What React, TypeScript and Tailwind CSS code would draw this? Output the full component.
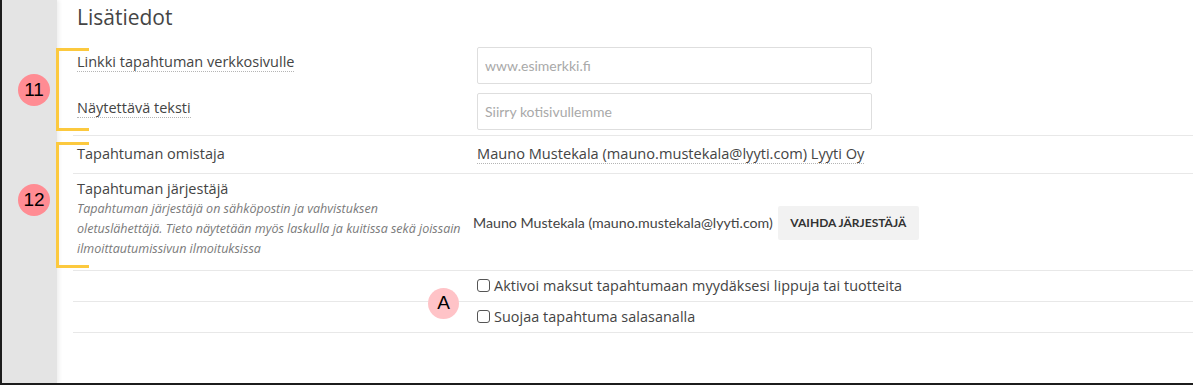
import React from "react";

const labelFont = { fontFamily: '"Open Sans", "Noto Sans", sans-serif' };
const lato = { fontFamily: 'Lato, "Liberation Sans", sans-serif' };

function Badge({ text, light, className }: { text: string; light?: boolean; className: string }) {
  return (
    <div
      className={`absolute flex items-center justify-center rounded-full text-[19px] font-medium text-black ${light ? "bg-[#ffc3c7]" : "bg-[#ff8c93]"} ${className}`}
      style={{ fontFamily: '"Liberation Sans", Arial, sans-serif' }}
    >
      {text}
    </div>
  );
}

function DottedLabel({ children }: { children: React.ReactNode }) {
  return <span className="inline-block border-b border-dotted border-[#b5b5b5] leading-[19px]">{children}</span>;
}

function TextInput({ placeholder }: { placeholder: string }) {
  return (
    <input
      placeholder={placeholder}
      className="h-[37px] w-[395px] rounded-[2px] border border-[#dedede] bg-white px-[7px] text-[14px] text-[#444] placeholder:text-[#a9a9a9] outline-none"
      style={lato}
    />
  );
}

function CheckRow({ label }: { label: string }) {
  return (
    <div className="flex h-[31px] items-center border-b border-[#e8e8e8] pl-[404px]">
      <label className="flex items-center gap-[4px] text-[14.4px] tracking-[0.05px] text-[#444]">
        <span className="h-[13px] w-[13px] rounded-[3px] border border-[#555] bg-white" />
        <span>{label}</span>
      </label>
    </div>
  );
}

export default function App() {
  return (
    <div
      className="relative flex h-[385px] w-[1193px] overflow-hidden border-b-2 border-l-2 border-[#1c1c1c] bg-white text-[#444]"
      style={labelFont}
    >
      <div className="w-[55px] shrink-0 bg-[#e4e4e4] shadow-[2px_0_4px_rgba(0,0,0,0.07)]" />

      <div className="flex-1 pl-[16px]">
        <div className="h-[40px] pl-[4px] pt-[3px] text-[21px] leading-[28px] text-[#454545]">Lisätiedot</div>

        {/* section 11 */}
        <div className="flex flex-col gap-[9px] border-b border-[#e8e8e8] pb-[5px] pt-[7px]">
          <div className="flex h-[37px]">
            <div className="w-[404px] pl-[4px] pt-[4px] text-[14.5px]">
              <DottedLabel>Linkki tapahtuman verkkosivulle</DottedLabel>
            </div>
            <TextInput placeholder="www.esimerkki.fi" />
          </div>
          <div className="flex h-[37px]">
            <div className="w-[404px] pl-[4px] pt-[4px] text-[14.5px]">
              <DottedLabel>Näytettävä teksti</DottedLabel>
            </div>
            <TextInput placeholder="Siirry kotisivullemme" />
          </div>
        </div>

        {/* section 12 */}
        <div className="flex h-[38px] items-center border-b border-[#e8e8e8] pb-[2px]">
          <div className="w-[404px] pl-[4px] text-[14.5px]">Tapahtuman omistaja</div>
          <div className="text-[14.6px]">
            <DottedLabel>Mauno Mustekala (mauno.mustekala@lyyti.com) Lyyti Oy</DottedLabel>
          </div>
        </div>

        <div className="flex border-b border-[#e8e8e8] pb-[11px] pt-[5px]">
          <div className="w-[400px] pl-[4px]">
            <div className="text-[14.5px] leading-[20px]">Tapahtuman järjestäjä</div>
            <div className="whitespace-nowrap text-[12.5px] italic leading-[20px] text-[#7a7a7a]">
              Tapahtuman järjestäjä on sähköpostin ja vahvistuksen
              <br />
              oletuslähettäjä. Tieto näytetään myös laskulla ja kuitissa sekä joissain
              <br />
              ilmoittautumissivun ilmoituksissa
            </div>
          </div>
          <div className="flex items-center gap-[5px] pt-[8px]">
            <span className="text-[14.2px]" style={lato}>
              Mauno Mustekala (mauno.mustekala@lyyti.com)
            </span>
            <button className="h-[34px] w-[141px] rounded-[2px] bg-[#f2f2f2] text-[12px] font-bold text-[#333]" style={lato}>
              VAIHDA JÄRJESTÄJÄ
            </button>
          </div>
        </div>

        <CheckRow label="Aktivoi maksut tapahtumaan myydäksesi lippuja tai tuotteita" />
        <CheckRow label="Suojaa tapahtuma salasanalla" />
      </div>

      {/* annotations */}
      <div className="absolute left-[54px] top-[48px] h-[83px] w-[33px] border-y-[3px] border-l-[3px] border-[#fcc93e]" />
      <div className="absolute left-[54px] top-[142px] h-[126px] w-[33px] border-y-[3px] border-l-[3px] border-[#fcc93e]" />
      <Badge text="11" className="left-[16px] top-[74px] h-[32px] w-[32px]" />
      <Badge text="12" className="left-[16px] top-[184px] h-[32px] w-[32px]" />
      <Badge text="A" light className="left-[426px] top-[288px] h-[31px] w-[31px]" />
    </div>
  );
}
